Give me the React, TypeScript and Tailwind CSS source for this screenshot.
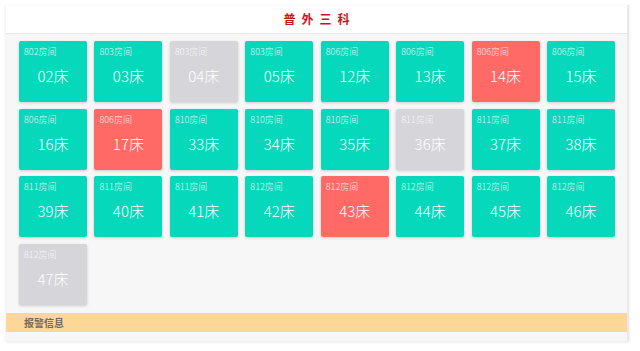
import React from "react";

type Bed = { room: string; bed: string; status?: "alarm" | "empty" };

const beds: Bed[] = [
  { room: "802", bed: "02" },
  { room: "803", bed: "03" },
  { room: "803", bed: "04", status: "empty" },
  { room: "803", bed: "05" },
  { room: "806", bed: "12" },
  { room: "806", bed: "13" },
  { room: "806", bed: "14", status: "alarm" },
  { room: "806", bed: "15" },
  { room: "806", bed: "16" },
  { room: "806", bed: "17", status: "alarm" },
  { room: "810", bed: "33" },
  { room: "810", bed: "34" },
  { room: "810", bed: "35" },
  { room: "811", bed: "36", status: "empty" },
  { room: "811", bed: "37" },
  { room: "811", bed: "38" },
  { room: "811", bed: "39" },
  { room: "811", bed: "40" },
  { room: "811", bed: "41" },
  { room: "812", bed: "42" },
  { room: "812", bed: "43", status: "alarm" },
  { room: "812", bed: "44" },
  { room: "812", bed: "45" },
  { room: "812", bed: "46" },
  { room: "812", bed: "47", status: "empty" },
];

const BedCard = ({ room, bed, status }: Bed) => {
  const bg =
    status === "alarm" ? "bg-[#ff6a67]" : status === "empty" ? "bg-[#d5d5da]" : "bg-[#06d8bb]";
  return (
    <div className={`${bg} h-[61px] rounded-[2px] shadow-[0_1px_3px_rgba(0,0,0,0.18)] text-white flex flex-col`}>
      <div className="pl-[5px] pt-[5px] text-[9px] leading-[12px] font-light opacity-85">{room}房间</div>
      <div className="text-center text-[15px] leading-[20px] font-light mt-[8px]">{bed}床</div>
    </div>
  );
};

export default function App() {
  return (
    <div
      className="w-[640px] h-[351px] bg-white pt-[5px] pl-[6px]"
      style={{ fontFamily: '"Noto Sans CJK SC", "Noto Sans", sans-serif' }}
    >
      <div className="w-[623px] bg-[#f7f7f8] border-r-2 border-[#e9e9ec] shadow-[0_1px_3px_rgba(0,0,0,0.1)]">
        <div className="h-[29px] bg-white border-b border-[#e6e6e8] flex items-center justify-center">
          <span className="text-[#d0101c] text-[12px] font-bold tracking-[6px] pl-[6px]">普外三科</span>
        </div>
        <div className="pt-[7px] pl-[13px] pr-[12px] pb-[8px] grid grid-cols-8 gap-x-[7.5px] gap-y-[6.5px]">
          {beds.map((b) => (
            <BedCard key={b.bed} {...b} />
          ))}
        </div>
        <div className="h-[19px] bg-[#fdd798] flex items-center pl-[18px] text-[10px] font-bold text-[#746a5f]">
          报警信息
        </div>
        <div className="h-[9px]" />
      </div>
    </div>
  );
}
